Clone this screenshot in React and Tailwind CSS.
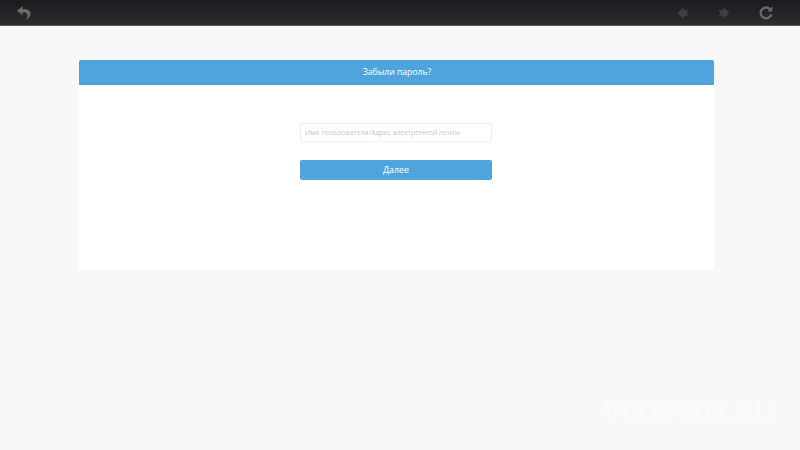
const FONT = "font-['Open_Sans','Noto_Sans',sans-serif]";

function BackIcon() {
  return (
    <svg width="16" height="16" viewBox="0 0 16 16" fill="none">
      <path d="M6.6 1 L1 5.8 L6.6 10.2 V7.4 C9.4 7.2 11 8.2 11.4 10 C11.8 11.8 10.8 13.6 9 15 C12.6 14.2 14.6 11.6 14.6 8.8 C14.6 5.6 11.4 3.8 6.6 4 Z" fill="#686969" />
    </svg>
  );
}

function ArrowIcon({ flip }) {
  return (
    <svg width="12" height="12" viewBox="0 0 13 13" fill="none" className={flip ? 'rotate-180' : ''}>
      <path d="M6.5 0.5 L0.5 6.5 L6.5 12.5 L8 9.5 L12.5 9.5 L10.5 6.5 L12.5 3.5 L8 3.5 Z" fill="#3c3e40" />
    </svg>
  );
}

function ReloadIcon() {
  return (
    <svg width="14" height="14" viewBox="0 0 14 14" fill="none">
      <path d="M11 3.2 A5.4 5.4 0 1 0 12.3 8.2" stroke="#686969" strokeWidth="2.3" />
      <path d="M8.2 5.6 H13.4 V0.4 Z" fill="#686969" />
    </svg>
  );
}

export default function App() {
  return (
    <div className={`relative h-[450px] w-[800px] overflow-hidden bg-[#f8f8f8] ${FONT}`}>
      {/* Top toolbar */}
      <div className="flex h-[26px] items-center justify-between border-b border-[#55575a] bg-gradient-to-b from-[#1b1b20] to-[#2b2e2e] pl-4 pr-[27px]">
        <BackIcon />
        <div className="flex items-center">
          <ArrowIcon />
          <div className="ml-[29px]"><ArrowIcon flip /></div>
          <div className="ml-[29px]"><ReloadIcon /></div>
        </div>
      </div>

      {/* Card */}
      <div className="ml-[79px] mt-[34px] h-[209px] w-[635px] bg-white">
        <div className="flex h-[25px] items-center justify-center rounded-t-[2px] bg-[#4ea5de] pl-[1px] text-[8.6px] font-medium text-white">
          Забыли пароль?
        </div>
        <div className="flex flex-col items-center pr-[1px] pt-[38px]">
          <input
            type="text"
            placeholder="Имя пользователя/Адрес электронной почты"
            className="h-[19px] w-[192px] rounded-[2px] border border-[#f0f0f0] bg-white px-[4px] text-[7px] outline-none placeholder:text-[#c8c8c8]"
          />
          <button className="mt-[18px] h-[20px] w-[192px] rounded-[2px] bg-[#4ea5de] pt-[1px] text-[8.8px] font-medium text-white">
            Далее
          </button>
        </div>
      </div>

      {/* Watermark */}
      <div className="absolute right-[24px] top-[393px] text-[30px] leading-9 font-bold text-[#fafafa]">
        VOTPAD.RU
      </div>
    </div>
  );
}
